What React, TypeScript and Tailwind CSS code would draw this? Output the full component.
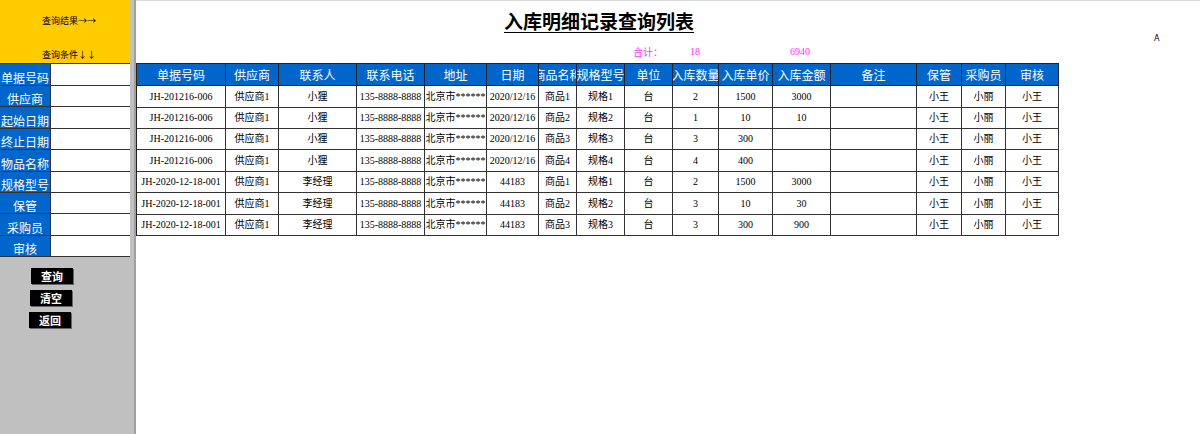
import React from 'react';

const cols = [89, 53, 78, 68, 62, 52, 38, 48, 48, 46, 54, 58, 86, 45, 44, 53];
const heads = ['单据号码', '供应商', '联系人', '联系电话', '地址', '日期', '商品名称', '规格型号', '单位', '入库数量', '入库单价', '入库金额', '备注', '保管', '采购员', '审核'];

const rows: string[][] = [
  ['JH-201216-006', '供应商1', '小狸', '135-8888-8888', '北京市******', '2020/12/16', '商品1', '规格1', '台', '2', '1500', '3000', '', '小王', '小丽', '小王'],
  ['JH-201216-006', '供应商1', '小狸', '135-8888-8888', '北京市******', '2020/12/16', '商品2', '规格2', '台', '1', '10', '10', '', '小王', '小丽', '小王'],
  ['JH-201216-006', '供应商1', '小狸', '135-8888-8888', '北京市******', '2020/12/16', '商品3', '规格3', '台', '3', '300', '', '', '小王', '小丽', '小王'],
  ['JH-201216-006', '供应商1', '小狸', '135-8888-8888', '北京市******', '2020/12/16', '商品4', '规格4', '台', '4', '400', '', '', '小王', '小丽', '小王'],
  ['JH-2020-12-18-001', '供应商1', '李经理', '135-8888-8888', '北京市******', '44183', '商品1', '规格1', '台', '2', '1500', '3000', '', '小王', '小丽', '小王'],
  ['JH-2020-12-18-001', '供应商1', '李经理', '135-8888-8888', '北京市******', '44183', '商品2', '规格2', '台', '3', '10', '30', '', '小王', '小丽', '小王'],
  ['JH-2020-12-18-001', '供应商1', '李经理', '135-8888-8888', '北京市******', '44183', '商品3', '规格3', '台', '3', '300', '900', '', '小王', '小丽', '小王'],
];

const rowH = [22, 21, 21, 22, 21, 22, 21];
const formLabels = ['单据号码', '供应商', '起始日期', '终止日期', '物品名称', '规格型号', '保管', '采购员', '审核'];
const formH = [22, 21, 22, 21, 22, 21, 21, 22, 21];

const cjk = { fontFamily: '"Liberation Serif", "Noto Sans CJK SC", serif' };

export default function App() {
  return (
    <div className="flex h-[434px] w-[1200px] overflow-hidden bg-white" style={{ fontFamily: '"Noto Sans CJK SC", sans-serif' }}>
      {/* side panel */}
      <div className="flex w-[136px] shrink-0 flex-col border-r-2 border-[#a0a0a0] bg-[#c0c0c0]">
        <div className="flex h-[63px] w-[130px] flex-col items-center bg-[#ffcc00] text-[9px] text-black">
          <div className="mt-[14px] pl-[8px]">查询结果→→</div>
          <div className="mt-[20px] pl-[8px]">查询条件↓↓</div>
        </div>
        <div className="w-[130px] border-t border-[#333]">
          {formLabels.map((l, i) => (
            <div key={l} className="flex border-b border-[#333]" style={{ height: formH[i] }}>
              <div className="flex w-[51px] items-end justify-center border-r border-[#333] bg-[#0066cc] pb-[1px] text-[12px] leading-none text-white">
                {l}
              </div>
              <div className="flex-1 bg-white" />
            </div>
          ))}
        </div>
        <div className="mt-[11px] flex flex-col gap-[6px]">
          {['查询', '清空', '返回'].map((b, i) => (
            <div
              key={b}
              className="flex h-[16px] w-[42px] items-center justify-center bg-black text-[11px] font-bold text-white shadow-[1px_1px_0_#666]"
              style={{ marginLeft: 31 - i }}
            >
              {b}
            </div>
          ))}
        </div>
      </div>

      {/* main area */}
      <div className="flex flex-1 flex-col border-t border-[#d8d8d8]">
        <div className="relative h-[62px]">
          <div
            className="absolute left-[368px] top-[10px] text-[19px] font-bold leading-none text-black underline decoration-1 underline-offset-[3px]"
            style={{ fontFamily: '"Noto Sans CJK SC", serif' }}
          >
            入库明细记录查询列表
          </div>
          <div className="absolute left-[1018px] top-[32px] text-[8px] text-black" style={{ fontFamily: '"DejaVu Sans", sans-serif' }}>A</div>
          <div className="absolute left-[497px] top-[46px] text-[10px] leading-none text-[#ff33ff]">合计：</div>
          <div className="absolute left-[554px] top-[46px] text-[10px] leading-none text-[#ff33ff]" style={cjk}>18</div>
          <div className="absolute left-[654px] top-[46px] text-[10px] leading-none text-[#ff33ff]" style={cjk}>6940</div>
        </div>

        <div className="w-[923px] border-l border-t border-[#222]">
          <div className="flex h-[22px] bg-[#0066cc]">
            {heads.map((h, i) => (
              <div
                key={h}
                className="flex items-center justify-center overflow-hidden whitespace-nowrap border-b border-r border-[#222] text-[12px] leading-none text-white"
                style={{ width: cols[i] }}
              >
                {h}
              </div>
            ))}
          </div>
          {rows.map((r, ri) => (
            <div key={ri} className="flex" style={{ height: rowH[ri] }}>
              {r.map((c, ci) => (
                <div
                  key={ci}
                  className="flex items-center justify-center overflow-hidden whitespace-nowrap border-b border-r border-[#333] text-[10px] leading-none text-black"
                  style={{ width: cols[ci], ...cjk }}
                >
                  {c}
                </div>
              ))}
            </div>
          ))}
        </div>
      </div>
    </div>
  );
}
